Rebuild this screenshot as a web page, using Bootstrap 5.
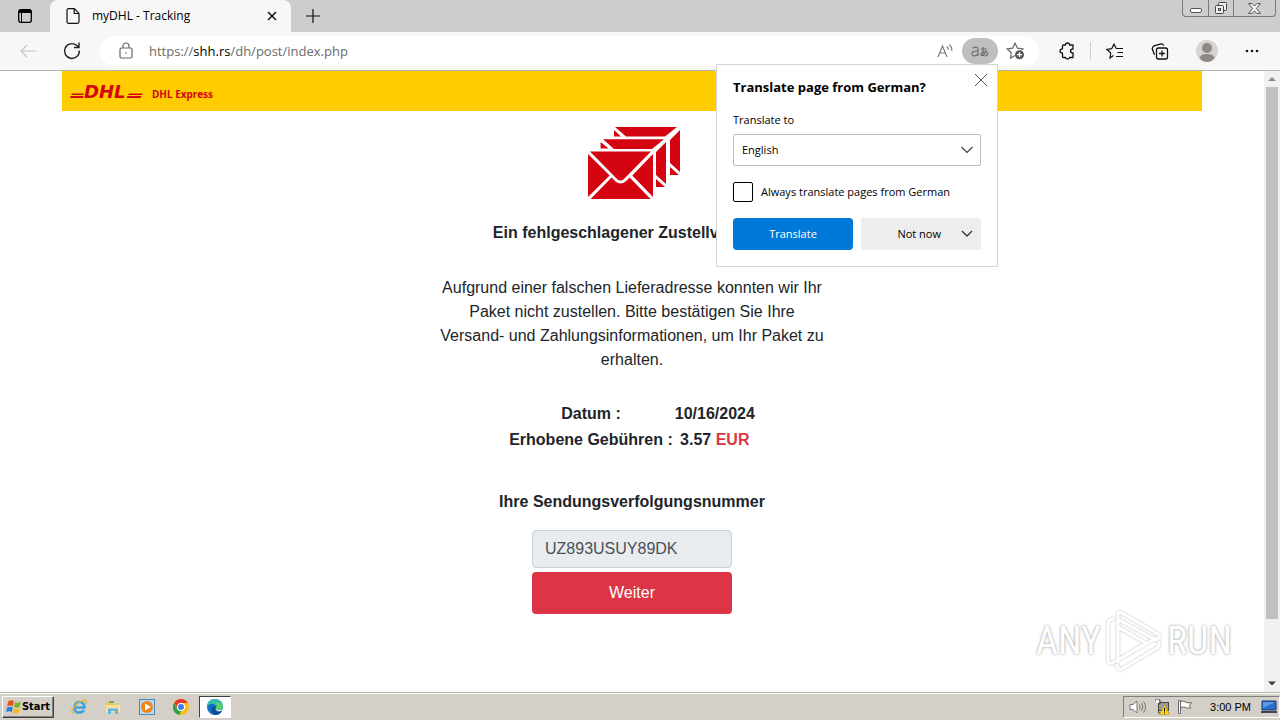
<!DOCTYPE html>
<html lang="de">
<head>
<meta charset="utf-8">
<meta name="viewport" content="width=device-width, initial-scale=1">
<title>myDHL - Tracking</title>
<link href="https://cdn.jsdelivr.net/npm/bootstrap@5.3.0/dist/css/bootstrap.min.css" rel="stylesheet">
<style>
  body { font-family: "Liberation Sans", Arial, sans-serif; font-size: 16px; line-height: 24px; color: #212529; background: #fff; }
  button { padding: 0; border: 0; background: none; color: inherit; }
  svg { display: block; flex: none; }
  .ui { font-family: "Open Sans", "Noto Sans", sans-serif; font-size: 12px; line-height: 16px; color: #000; }

  /* browser frame */
  .tabstrip { height: 32px; background: #cdcdcd; }
  .tabstrip-start { width: 50px; border-bottom-right-radius: 8px; }
  .page-tab { width: 241px; background: #f7f7f7; border-radius: 8px 8px 0 0; padding: 0 14px 0 16px; }
  .new-tab { width: 44px; }
  .win-btns { height: 17px; margin-right: 4px; border: 1px solid #777; border-top: 0; border-radius: 0 0 4px 4px; }
  .win-btns button { width: 25px; height: 16px; display: flex; align-items: center; justify-content: center; }
  .win-btns button + button { border-left: 1px solid #777; }
  .win-btns button:last-child { width: 42px; }
  .toolbar { height: 39px; background: #f7f7f7; border-bottom: 1px solid #b4b4b4; padding: 0 21px 0 18px; }
  .address { height: 30px; border-radius: 15px; background: #fff; margin-left: 18px; padding: 0 13px 0 18px; min-width: 0; }
  .address-text { font-size: 13px; line-height: 18px; color: #6b6b6b; margin-left: 15px; }
  .address-text b { font-weight: 400; color: #000; }
  .lang-btn { width: 36px; height: 26px; border-radius: 13px; background: #bfbfbf; }
  .tool-icons { gap: 27px; margin-left: 20px; }
  .tool-sep { width: 1px; height: 18px; background: #ccc; margin: 0 -12px; }

  /* translate popup */
  .translate-pop { position: absolute; top: 64px; right: 282px; width: 282px; z-index: 5; background: #fff; border: 1px solid #d4d4d4; padding: 13px 16px 16px; font-size: 11px; }
  .pop-title { font-size: 13px; line-height: 18px; font-weight: 700; margin: 0; }
  .pop-close { position: absolute; top: 8px; right: 9px; }
  .pop-label { display: block; margin: 16px 0 6px; }
  .pop-select { height: 32px; border: 1px solid #bcbcbc; border-radius: 2px; padding: 0 8px; width: 100%; appearance: none; background: none; color: #000; }
  .pop-arrow { position: absolute; right: 8px; top: 12px; pointer-events: none; }
  .pop-check { width: 20px; height: 20px; appearance: none; border: 1px solid #000; border-radius: 2px; margin: 0; }
  .pop-btn { flex: none; width: calc(50% - 4px); height: 32px; border-radius: 2px; background: #ededed; }
  .pop-btn.blue { background: #0078d7; color: #fff; border-radius: 4px; }

  /* page */
  .viewport-col { min-width: 0; }
  .page-wide { max-width: 1140px; }
  .brand-bar { height: 40px; background: #fc0; padding-left: 8px; gap: 9px; }
  .brand-name { font: 700 10px/14px "Noto Sans", "Open Sans", sans-serif; color: #d40511; text-decoration: none; padding-top: 6px; }
  .notice { max-width: 388px; padding-top: 16px; }
  .notice h1 { font-size: 16px; line-height: 24px; font-weight: 700; margin: 22px 0 0; white-space: nowrap; }
  .notice p { margin: 31px 0 29px; }
  .fees th, .fees td { padding: 1px; text-align: center; font-weight: 700; }
  .fees { margin-bottom: 37px; }
  .track-form { width: 200px; }
  .track-label { font-weight: 700; margin-bottom: 16px; white-space: nowrap; }
  .track-input { height: 38px; background: #e9ecef; border: 1px solid #c3d3e0; color: #495057; }
  .track-btn { height: 42px; margin-top: 4px; border-radius: 4px; background: #dc3545; color: #fff; }
  .scroll-rail { width: 16px; background: #f1f1f1; }
  .scroll-thumb { width: 12px; flex: 0 1 532px; background: #c1c1c1; }

  /* watermark */
  .watermark { position: absolute; right: 48px; bottom: 48px; color: #fff; gap: 4px; font: 400 38px/44px "Roboto Condensed", "Open Sans Condensed", Roboto, sans-serif; text-shadow: 0 0 3px #aaa, 0 0 2px #ccc; pointer-events: none; }
  .watermark svg { filter: drop-shadow(0 0 1px #bbb); }

  /* taskbar */
  .taskbar { height: 28px; background: #d4d0c8; border-top: 1px solid #b8b5af; box-shadow: inset 0 1px #fff; padding: 1px 0 0 2px; }
  .start-btn { width: 52px; height: 22px; border: 1px solid; border-color: #fff #404040 #404040 #fff; box-shadow: inset -1px -1px #808080; font: 700 11px/14px "DejaVu Sans Condensed", "DejaVu Sans", sans-serif; color: #000; }
  .task-icons { gap: 18px; margin-left: 17px; }
  .task-active { width: 32px; height: 22px; margin-left: 10px; background: #fff; border: 1px solid; border-color: #404040 #fff #fff #404040; }
  .tray { height: 22px; border: 1px solid; border-color: #808080 #fff #fff #808080; padding: 0 1px 0 5px; gap: 7px; }
  .tray-clock { font: 400 11px/14px "Liberation Sans", sans-serif; color: #000; margin: 0 2px 0 10px; }
</style>
</head>
<body class="d-flex flex-column vh-100 overflow-hidden position-relative">

<header class="ui">
  <div class="tabstrip d-flex">
    <div class="tabstrip-start d-flex align-items-center justify-content-center">
      <svg width="14" height="14" viewBox="0 0 14 14" fill="none" stroke="#000"><rect x=".7" y=".7" width="12.6" height="12.6" rx="2" stroke-width="1.3"/><path d="M1 2.500h12" stroke-width="3"/><path d="M3.500 4v9"/></svg>
    </div>
    <div class="page-tab d-flex align-items-center">
      <svg width="14" height="16" viewBox="0 0 14 16" fill="none" stroke="#111" stroke-width="1.2"><path d="M2.500.7h5.800L13 5.400v8.400c0 .9-.6 1.500-1.500 1.500h-9C1.600 15.300 1 14.700 1 13.800V2.200C1 1.300 1.600.7 2.500.7zM8.200.8v4.700H13"/></svg>
      <span class="ms-2 ps-1 flex-grow-1 text-nowrap">myDHL - Tracking</span>
      <button aria-label="Close tab"><svg width="10" height="10" viewBox="0 0 10 10" stroke="#111" stroke-width="1.500"><path d="M1 1l8 8M9 1L1 9"/></svg></button>
    </div>
    <button class="new-tab d-flex align-items-center justify-content-center" aria-label="New tab"><svg width="14" height="14" viewBox="0 0 14 14" stroke="#111" stroke-width="1.200"><path d="M7 0v14M0 7h14"/></svg></button>
    <div class="win-btns d-flex ms-auto">
      <button aria-label="Minimize"><svg width="12" height="12" viewBox="0 0 12 12"><rect x=".5" y="6.500" width="11" height="4" rx="1.500" fill="#fff" stroke="#555"/></svg></button>
      <button aria-label="Restore"><svg width="12" height="12" viewBox="0 0 12 12" fill="#eee" stroke="#444"><rect x="3.500" y=".5" width="8" height="8" rx="1"/><rect x=".5" y="3.500" width="8" height="8" rx="1"/><rect x="3.500" y="6.500" width="2" height="2"/></svg></button>
      <button aria-label="Close"><svg width="13" height="11" viewBox="0 0 13 11"><path d="M.6.6h3.600l2.300 2.500L8.800.6h3.600L8.400 5.500l4 4.900H8.800L6.500 7.900l-2.300 2.500H.6l4-4.900z" fill="#f4f4f4" stroke="#555"/></svg></button>
    </div>
  </div>

  <div class="toolbar d-flex align-items-center">
    <button aria-label="Back"><svg width="20" height="16" viewBox="0 0 20 16" fill="none" stroke="#c4c4c4" stroke-width="1.200"><path d="M18 8H3M9 2L3 8l6 6"/></svg></button>
    <button class="ms-4" aria-label="Reload"><svg width="20" height="20" viewBox="0 0 20 20" fill="none" stroke="#222" stroke-width="1.400"><path d="M17.300 9.500a7.400 7.400 0 1 1-2.700-5.200l2.200 1.900M17 1.500v5h-5"/></svg></button>
    <div class="address d-flex align-items-center flex-grow-1">
      <svg width="16" height="18" viewBox="0 0 16 18" fill="none" stroke="#666" stroke-width="1.200"><rect x="2" y="6" width="12" height="10" rx="1.500"/><path d="M5 6V4a3 3 0 0 1 6 0v2"/><circle cx="8" cy="11" r=".8" fill="#666" stroke="none"/></svg>
      <span class="address-text flex-grow-1 text-nowrap">https://<b>shh.rs</b>/dh/post/index.php</span>
      <button aria-label="Read aloud"><svg width="18" height="18" viewBox="0 0 18 18" fill="none" stroke="#777" stroke-width="1.100"><path d="M2 15L6.500 4 11 15M3.600 11h5.800M11 4.500q1.500 1.500 1.300 3.500M13.200 2.500q3 2.500 2.600 6.500"/></svg></button>
      <button class="lang-btn d-flex align-items-center justify-content-center mx-2" aria-label="Translate page"><svg width="18" height="16" viewBox="0 0 18 16" fill="none" stroke="#6d6d6d" stroke-width="1.200"><path d="M1.500 5Q6.500 2.500 7 6.500V13M7 8Q1 7.800 1 10.800c0 3 4.500 2.700 6-.3M9.500 6h6.500M12 4v6.500q.2 2 1 2.500M15 7.500c-1 4-3 5.500-4.500 5-1.600-.7 0-4 3.500-4s3.500 4 0 4.700"/></svg></button>
      <button aria-label="Add to favorites"><svg width="20" height="18" viewBox="0 0 20 18" fill="none" stroke="#666" stroke-width="1.200"><path d="M9 13.500l-4.500 2.600.8-5.300L1.200 7l5.400-.8L9 1.200l2.500 5 5.400.8-1 1"/><circle cx="13.500" cy="12.700" r="4.500" fill="#555" stroke="none"/><path d="M13.500 10.200v5M11 12.700h5" stroke="#fff"/></svg></button>
    </div>
    <div class="tool-icons d-flex align-items-center">
      <button aria-label="Extensions"><svg width="16" height="18" viewBox="0 0 16 18" fill="none" stroke="#111" stroke-width="1.300" stroke-linejoin="round"><path d="M4.500 3h2q0-2 2-2t2 2h3.500v4q-2.500 0-2.500 2t2.500 2v4.500h-3.500q0 1.500-2 1.500t-2-1.500h-2q-1 0-1-1V11.200Q1 11 1 9t2.500-2.200V4q0-1 1-1z"/></svg></button>
      <span class="tool-sep"></span>
      <button aria-label="Favorites"><svg width="18" height="17" viewBox="0 0 18 17" fill="none" stroke="#111" stroke-width="1.200"><path d="M7.500 12.500L4 15l.7-5L1 6.500l4.700-.8L8 1.200l2.300 4.300H17M11.500 9.500H17M10 13.500h7"/></svg></button>
      <button aria-label="Collections"><svg width="18" height="17" viewBox="0 0 18 17" fill="none" stroke="#111" stroke-width="1.300"><rect x="5.500" y="5" width="11" height="11" rx="2"/><path d="M11 7.500v6M8 10.500h6M3.500 11.800L1.300 6Q1 4 3 2.800l7-1.900q2-.3 2.700 1.700"/></svg></button>
      <button aria-label="Profile"><svg width="22" height="22" viewBox="0 0 22 22"><circle cx="11" cy="11" r="11" fill="#d6d3d1"/><circle cx="11" cy="8" r="5" fill="#8e8986"/><path d="M3.500 18q1-4 7.500-4t7.500 4q-3 4-7.500 4t-7.500-4" fill="#8e8986"/></svg></button>
      <button aria-label="Settings and more"><svg width="14" height="4" viewBox="0 0 14 4" fill="#111"><circle cx="2" cy="2" r="1.300"/><circle cx="7" cy="2" r="1.300"/><circle cx="12" cy="2" r="1.300"/></svg></button>
    </div>
  </div>

  <section class="translate-pop" aria-label="Translate">
    <h2 class="pop-title">Translate page from German?</h2>
    <button class="pop-close" aria-label="Dismiss"><svg width="14" height="14" viewBox="0 0 14 14" stroke="#555"><path d="M1 1l12 12M13 1L1 13"/></svg></button>
    <label class="pop-label" for="target">Translate to</label>
    <div class="position-relative">
      <select class="pop-select" id="target"><option>English</option></select>
      <svg class="pop-arrow" width="12" height="8" viewBox="0 0 12 8" fill="none" stroke="#444" stroke-width="1.200"><path d="M.5 1L6 6.500 11.500 1"/></svg>
    </div>
    <div class="d-flex align-items-center gap-2 my-3">
      <input class="pop-check" type="checkbox" id="always"><label class="text-nowrap" for="always">Always translate pages from German</label>
    </div>
    <div class="d-flex gap-2">
      <button class="pop-btn blue">Translate</button>
      <button class="pop-btn d-flex align-items-center justify-content-end gap-3 pe-2"><span>Not now</span><svg class="ms-1" width="12" height="8" viewBox="0 0 12 8" fill="none" stroke="#333" stroke-width="1.300"><path d="M1 1l5 5 5-5"/></svg></button>
    </div>
  </section>
</header>

<div class="d-flex flex-grow-1 position-relative overflow-hidden">
  <main class="viewport-col flex-grow-1">
    <div class="page-wide mx-auto">
      <nav class="brand-bar d-flex align-items-center">
        <svg width="73" height="28" viewBox="0 0 73 28" role="img" aria-label="DHL"><path d="M2 16.500h12l-1 1.500H1zM.7 19h13l-1 2H0zM59 16.500h14l-1 1.500H58zM57.500 19h14l-1 2h-14z" fill="#d40511"/><text x="14" y="21" fill="#d40511" font-family="DejaVu Sans" font-weight="700" font-style="italic" font-size="18">DHL</text></svg>
        <a class="brand-name" href="#">DHL Express</a>
      </nav>
      <div class="notice mx-auto text-center d-flex flex-column align-items-center">
        <svg class="ms-1" width="92" height="72" viewBox="0 0 92 72" fill="#d40511">
          <path d="M27 0h62L77 9.500H38zM26 3l7 6.500h-7zM92 3v42l-10-9V13zM82 40l9 8h-9z"/>
          <path d="M15 12.300h61L64 22H26zM12.600 15l8 6.500h-8zM78 15v42l-10-9V25zM68 52l9 8h-9z"/>
          <path d="M2 24.600h61L36 52q-3.500 3-7 0zM0 27l21.600 21.600L0 70zM65 27v43L44.300 48.600zM2.600 72l21-21.400 4 3.800q5 4 10 0l4-3.800L62.600 72z"/>
        </svg>
        <h1>Ein fehlgeschlagener Zustellversuch</h1>
        <p>Aufgrund einer falschen Lieferadresse konnten wir Ihr Paket nicht zustellen. Bitte bestätigen Sie Ihre Versand- und Zahlungsinformationen, um Ihr Paket zu erhalten.</p>
        <table class="fees">
          <tr><th scope="row">Datum :</th><td>10/16/2024</td></tr>
          <tr><th scope="row">Erhobene Gebühren :</th><td>3.57 <span class="text-danger">EUR</span></td></tr>
        </table>
        <label class="track-label" for="tracking">Ihre Sendungsverfolgungsnummer</label>
        <div class="track-form">
          <input class="form-control track-input rounded-1" id="tracking" type="text" value="UZ893USUY89DK" readonly>
          <button class="track-btn w-100" type="button">Weiter</button>
        </div>
      </div>
    </div>
  </main>
  <div class="scroll-rail d-flex flex-column align-items-center" aria-hidden="true">
    <svg width="16" height="16" viewBox="0 0 16 16"><path d="M4 10l4-4 4 4z" fill="#8a8a8a"/></svg>
    <div class="scroll-thumb"></div>
    <svg class="mt-auto" width="16" height="17" viewBox="0 0 16 16"><path d="M4 6l4 4 4-4z" fill="#404040"/></svg>
  </div>
</div>

<footer class="taskbar d-flex align-items-center">
  <button class="start-btn d-flex align-items-center justify-content-center">
    <svg width="16" height="16" viewBox="0 0 14 14"><path d="M2 2q3-2 5 0L6 6.500q-2-1.500-5 0z" fill="#e8541e"/><path d="M8 2.500q2 1.500 5 0l-1 4.300q-3 1.500-5 0z" fill="#7ab62c"/><path d="M1 7.500q3-1.500 5 0l-1 4q-2-1.500-5 0z" fill="#2d7fd6"/><path d="M7 8q2 1.500 5 0l-1 4q-3 1.500-5 0z" fill="#f7b91a"/></svg>Start
  </button>
  <div class="task-icons d-flex align-items-center">
    <svg width="16" height="16" viewBox="0 0 16 16" fill="none"><path d="M4.500 8.500h9Q13 3 8.500 3T3.500 8.500t5 5q3 0 4.500-2.500" stroke="#3aa3e3" stroke-width="2.600"/><path d="M2 14.500Q-1 13 4 7t11-5.500q1 1-.5 3.500" stroke="#e8b42a" stroke-width="1.200"/></svg>
    <svg width="16" height="16" viewBox="0 0 16 16"><path d="M1 3h5l1 1.500h8V9H1z" fill="#e8c765"/><path d="M4 2h5v2H4z" fill="#6cb64a"/><path d="M1 6h14v7H1z" fill="#f7e3a0"/><path d="M3 15V9.500h10V15h-3v-3H6v3z" fill="#62b5e0"/></svg>
    <svg width="16" height="16" viewBox="0 0 16 16"><rect x=".5" y=".5" width="15" height="15" fill="#b9d7ef" stroke="#4a88bd"/><circle cx="8" cy="8" r="6" fill="#f28518"/><path d="M6 4.500v7L12 8z" fill="#fff"/></svg>
    <svg width="16" height="16" viewBox="0 0 16 16"><circle cx="8" cy="8" r="8" fill="#fbc116"/><path d="M1 4a8 8 0 0 1 14 0H8L5 10z" fill="#e33b2e"/><path d="M1 4l4 7 3 1-1.500 4A8 8 0 0 1 1 4z" fill="#30a24c"/><circle cx="8" cy="8" r="4" fill="#fff"/><circle cx="8" cy="8" r="3" fill="#3f7ee8"/></svg>
  </div>
  <div class="task-active d-flex align-items-center justify-content-center">
    <svg width="16" height="16" viewBox="0 0 16 16"><circle cx="8" cy="8" r="8" fill="#1470c2"/><path d="M0 7Q1 0 8 0q7.500.5 8 7 0 4-5 4-2 0-2-1 1.500-1.500 0-3.500Q5.500 3 0 7z" fill="#35bfae"/><path d="M9 7q-3 1-1 4 2 3 7 1-2 4-7 4-4-2-3.500-6Q5 7 9 7z" fill="#0b4a94"/><path d="M16 7q0 4-5 4-2 0-2-1l.5-2Q11 5 8 4q5-1 8 3z" fill="#5bd25d"/><path d="M9.300 9Q9 11 11 11.200q3 .2 4.500-1.200-.5 2-2 2-5 1-4.200-3z" fill="#fff"/></svg>
  </div>
  <div class="tray d-flex align-items-center ms-auto">
    <svg width="18" height="16" viewBox="0 0 18 16" fill="none" stroke="#777"><path d="M1 5.500h3L8 2v12l-4-3.500H1z" fill="#fff"/><path d="M10.500 5.500q1.500 2.500 0 5M12.500 4q3 4 0 8M14.500 2.500q4 5.500 0 11"/></svg>
    <svg width="16" height="16" viewBox="0 0 16 16"><rect x="4.500" y="3.500" width="10" height="8" fill="#999" stroke="#444"/><path d="M1 1h5v4H4.500v9H15" fill="none" stroke="#444"/><path d="M2 1h3v3H2z" fill="#fff"/><path d="M10.500 6l5 9.500h-10z" fill="#fbd51c" stroke="#b89400" stroke-width=".6"/><path d="M10.500 9v3.500M10.500 13.500v1" stroke="#000"/></svg>
    <svg width="16" height="16" viewBox="0 0 16 16" fill="#fff" stroke="#666"><path d="M3.500 2.500q3-1 5 .5 2 1.500 6 .5l-2 3 1 2.500q-3 .5-5-.5t-5 0z"/><path d="M1.500 1.500h2v13h-2z"/></svg>
    <span class="tray-clock">3:00 PM</span>
    <svg width="18" height="16" viewBox="0 0 18 16"><path d="M2 2h14v9H2z" fill="#2a6fd0" stroke="#17396e"/><path d="M3 3h12L3 9z" fill="#5e9ae6"/><path d="M1 13h16" stroke="#445" stroke-width="2"/></svg>
  </div>
</footer>

<div class="watermark d-flex align-items-center" aria-hidden="true">
  <span>ANY</span>
  <svg width="58" height="62" viewBox="0 0 58 62" fill="none" stroke="#fff" stroke-width="3" stroke-linejoin="round" stroke-linecap="round"><path d="M13 52V4q0-3 4-1l36 21q3 3 0 5l-2 1L14 10M3 50V14q0-4 5-5M3 50q0 4 4 3l6-3 38-22M12 55q1 5 5 4l35-21q3-2 2-6M13 17l28 16-28 17"/></svg>
  <span>RUN</span>
</div>

<script src="https://cdn.jsdelivr.net/npm/bootstrap@5.3.0/dist/js/bootstrap.bundle.min.js"></script>
</body>
</html>
